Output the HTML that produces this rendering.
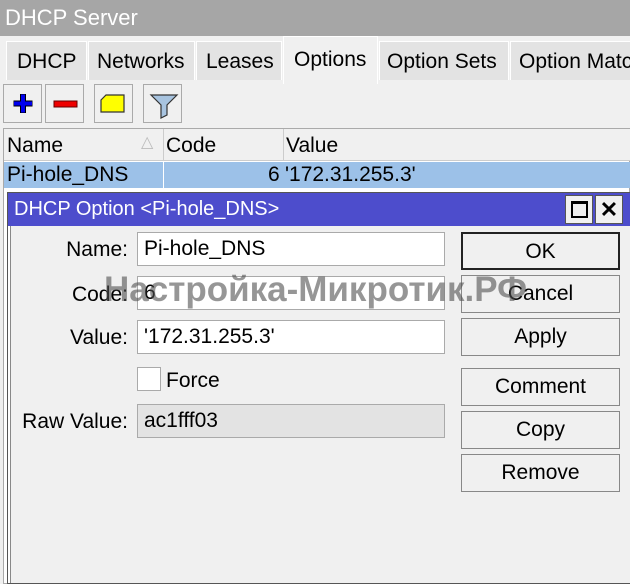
<!DOCTYPE html><html><head><style>
*{margin:0;padding:0;box-sizing:border-box}
body{width:630px;height:584px;overflow:hidden;background:#f0f0f0;font-family:"Liberation Sans",sans-serif;font-size:21px;color:#000;position:relative}
.a{position:absolute;white-space:nowrap}
.tab{position:absolute;top:41px;height:39px;background:#e3e3e3;border:1px solid #fff;border-bottom:none;line-height:40px;padding-left:10px;white-space:nowrap;overflow:hidden}
.btn{position:absolute;left:461px;width:159px;height:38px;border:1px solid #888;background:#f0f0f0;text-align:center;line-height:36px}
.in{position:absolute;left:137px;width:308px;height:34px;border:1px solid #aaa;background:#fff;padding-left:6px;line-height:32px}
.lb{position:absolute;right:502px;text-align:right;white-space:nowrap}
.tb{position:absolute;top:84px;width:39px;height:39px;border:1px solid #aaa;background:#f0f0f0}
</style></head><body>
<div class="a" style="left:0;top:0;width:630px;height:36px;background:#a6a6a6;color:#fff;font-size:22px;line-height:36px;padding-left:5px">DHCP Server</div>
<div class="tab" style="left:6px;width:81px">DHCP</div>
<div class="tab" style="left:88px;width:107px;padding-left:8px">Networks</div>
<div class="tab" style="left:196px;width:86px;padding-left:9px">Leases</div>
<div class="tab" style="left:283px;top:36px;height:48px;width:95px;background:#f0f0f0;line-height:46px;padding-left:10px">Options</div>
<div class="tab" style="left:379px;width:130px;padding-left:7px">Option Sets</div>
<div class="tab" style="left:510px;width:130px;padding-left:8px">Option Matcher</div>
<div class="tb" style="left:3px"><svg width="39" height="39"><path d="M19 9v19M9.5 18.5h19" stroke="#000" stroke-width="6"/><path d="M19 9.5v18M10 18.5h18" stroke="#0000ee" stroke-width="4"/></svg></div>
<div class="tb" style="left:45px"><svg width="39" height="39"><rect x="8" y="16" width="23" height="6" fill="#e00" stroke="#600" stroke-width="1"/></svg></div>
<div class="tb" style="left:94px"><svg width="39" height="39"><path d="M6 15l5-5h18v17H6z" fill="#ff0" stroke="#333" stroke-width="1.2"/></svg></div>
<div class="tb" style="left:143px"><svg width="39" height="39"><path d="M7 10h26l-10 10v10l-6 3V20z" fill="#a8c4e0" stroke="#333" stroke-width="1.2"/></svg></div>
<div class="a" style="left:3px;top:128px;width:627px;height:456px;background:#fff;border:1px solid #aaa"></div>
<div class="a" style="left:4px;top:129px;width:626px;height:32px;background:#f0f0f0;border-bottom:1px solid #ccc"></div>
<div class="a" style="left:163px;top:129px;width:1px;height:32px;background:#ccc"></div>
<div class="a" style="left:283px;top:129px;width:1px;height:32px;background:#ccc"></div>
<div class="a" style="left:7px;top:134px">Name</div>
<div class="a" style="left:141px;top:132px;color:#bbb;font-size:16px">△</div>
<div class="a" style="left:166px;top:134px">Code</div>
<div class="a" style="left:286px;top:134px">Value</div>
<div class="a" style="left:4px;top:162px;width:626px;height:26px;background:#9cc1e8"></div>
<div class="a" style="left:163px;top:162px;width:1px;height:26px;background:#fff"></div>
<div class="a" style="left:7px;top:163px">Pi-hole_DNS</div>
<div class="a" style="left:268px;top:163px">6</div>
<div class="a" style="left:285px;top:163px">'172.31.255.3'</div>
<div class="a" style="left:7px;top:192px;width:623px;height:392px;background:#f0f0f0;border:1px solid #555;border-right:none;box-shadow:inset 2px 0 0 #fff,inset 3px 0 0 #888"></div>
<div class="a" style="left:8px;top:193px;width:622px;height:33px;background:#4d4dcc;color:#fff;line-height:33px;padding-left:6px;font-size:20px">DHCP Option &lt;Pi-hole_DNS&gt;</div>
<div class="a" style="left:565px;top:195px;width:28px;height:29px;background:#f0f0f0;border:1px solid #555"><div class="a" style="left:5px;top:5px;width:17px;height:17px;border:2px solid #000;border-top-width:3px"></div></div>
<div class="a" style="left:595px;top:195px;width:28px;height:29px;background:#f0f0f0;border:1px solid #555;text-align:center;line-height:27px;font-weight:bold;font-size:22px">✕</div>
<div class="lb" style="top:238px">Name:</div><div class="in" style="top:232px">Pi-hole_DNS</div>
<div class="lb" style="top:283px">Code:</div><div class="in" style="top:276px">6</div>
<div class="lb" style="top:326px">Value:</div><div class="in" style="top:320px">'172.31.255.3'</div>
<div class="a" style="left:137px;top:367px;width:24px;height:24px;background:#fff;border:1px solid #aaa"></div>
<div class="a" style="left:166px;top:369px">Force</div>
<div class="lb" style="top:410px">Raw Value:</div><div class="in" style="top:404px;background:#e3e3e3">ac1fff03</div>
<div class="btn" style="top:232px;border:2px solid #222">OK</div>
<div class="btn" style="top:275px">Cancel</div>
<div class="btn" style="top:318px">Apply</div>
<div class="btn" style="top:368px">Comment</div>
<div class="btn" style="top:411px">Copy</div>
<div class="btn" style="top:454px">Remove</div>
<div class="a" style="left:104px;top:270px;font-size:35px;font-weight:bold;color:rgba(80,80,80,0.6)">Настройка-Микротик.РФ</div>
</body></html>
